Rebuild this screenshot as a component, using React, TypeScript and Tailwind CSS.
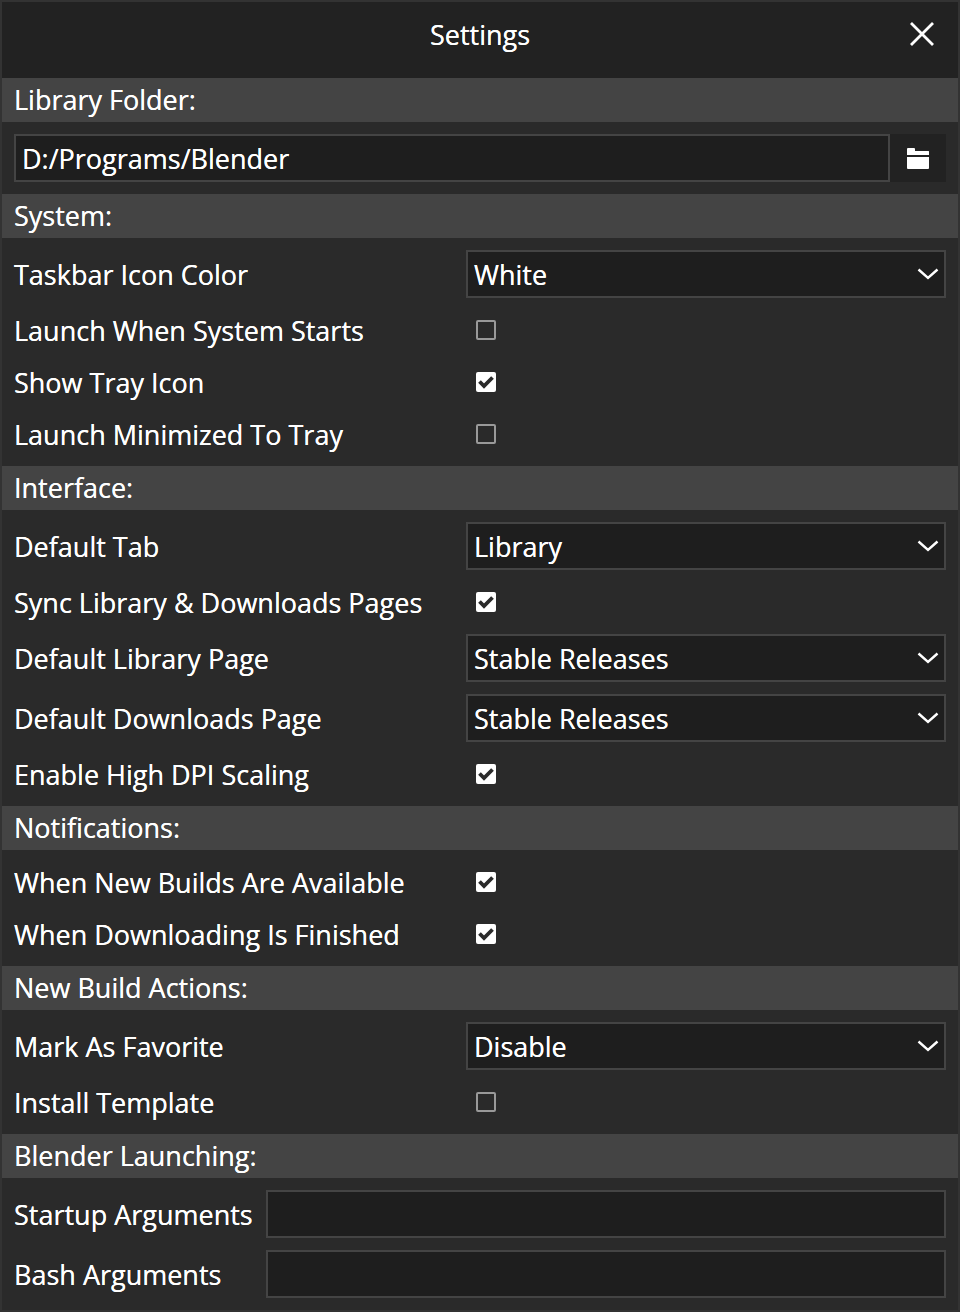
const Chevron = () => (
  <svg width="24" height="14" viewBox="0 0 24 14" className="shrink-0" fill="none">
    <path d="M2.5 2.5 L12 11 L21.5 2.5" stroke="#fff" strokeWidth="2.4" />
  </svg>
)

function Section({ title }: { title: string }) {
  return <div className="flex h-[44px] items-center bg-[#444444] px-3 pb-[2px] leading-none">{title}</div>
}

function Select({ value }: { value: string }) {
  return (
    <div className="flex h-[48px] w-[480px] items-center justify-between border-2 border-[#444444] bg-[#1e1e1e] pr-[4px] pl-[6px]">
      <span className="pt-[2px]">{value}</span>
      <Chevron />
    </div>
  )
}

function Checkbox({ checked }: { checked?: boolean }) {
  return (
    <div className="ml-[10px] flex h-[20px] w-[20px] items-center justify-center">
      {checked ? (
        <div className="flex h-[20px] w-[20px] items-center justify-center rounded-[2px] bg-white">
          <svg width="16" height="14" viewBox="0 0 16 14" fill="none">
            <path d="M1.5 6.5 L6 11 L14.5 2.5" stroke="#2a2a2a" strokeWidth="3.8" />
          </svg>
        </div>
      ) : (
        <div className="h-[20px] w-[20px] rounded-[2px] border-2 border-[#999999]" />
      )}
    </div>
  )
}

function SelectRow({ label, value }: { label: string; value: string }) {
  return (
    <div className="flex h-[60px] items-center px-3">
      <div className="w-[452px] shrink-0 pt-[2px]">{label}</div>
      <Select value={value} />
    </div>
  )
}

function CheckRow({ label, checked }: { label: string; checked?: boolean }) {
  return (
    <div className="flex h-[52px] items-center px-3">
      <div className="w-[452px] shrink-0 pt-[2px]">{label}</div>
      <Checkbox checked={checked} />
    </div>
  )
}

function ArgRow({ label }: { label: string }) {
  return (
    <div className="flex h-[60px] items-center px-3">
      <div className="w-[252px] shrink-0 pt-[2px]">{label}</div>
      <div className="h-[48px] flex-1 border-2 border-[#444444] bg-[#1e1e1e]" />
    </div>
  )
}

export default function App() {
  return (
    <div className="h-[1312px] w-[960px] border-2 border-[#333333] bg-[#2a2a2a] font-['Open_Sans',sans-serif] text-[27px] text-white [text-shadow:0_0_0.5px_#fff]">
      <div className="relative flex h-[76px] items-center justify-center bg-[#222222] pb-[10px]">
        <span>Settings</span>
        <svg width="24" height="24" viewBox="0 0 24 24" fill="none" className="absolute top-[20px] right-[24px]">
          <path d="M1 1 L23 23 M23 1 L1 23" stroke="#fff" strokeWidth="2.8" />
        </svg>
      </div>

      <Section title="Library Folder:" />
      <div className="flex h-[72px] items-center px-3">
        <div className="flex h-[48px] flex-1 items-center border-2 border-[#444444] bg-[#1e1e1e] pt-[2px] pl-[6px]">D:/Programs/Blender</div>
        <div className="flex h-[48px] w-[56px] items-center justify-center bg-[#222222]">
          <svg width="22" height="21" viewBox="0 0 22 21" fill="white">
            <path d="M0 1 a1 1 0 0 1 1-1 H7 a1 1 0 0 1 1 1 V3 H21.5 a.5 .5 0 0 1 .5 .5 V7 H0 Z" />
            <path d="M0 9 H22 V20 a1 1 0 0 1-1 1 H1 a1 1 0 0 1-1-1 Z" />
          </svg>
        </div>
      </div>

      <Section title="System:" />
      <div className="py-[6px]">
        <SelectRow label="Taskbar Icon Color" value="White" />
        <CheckRow label="Launch When System Starts" />
        <CheckRow label="Show Tray Icon" checked />
        <CheckRow label="Launch Minimized To Tray" />
      </div>

      <Section title="Interface:" />
      <div className="py-[6px]">
        <SelectRow label="Default Tab" value="Library" />
        <CheckRow label="Sync Library & Downloads Pages" checked />
        <SelectRow label="Default Library Page" value="Stable Releases" />
        <SelectRow label="Default Downloads Page" value="Stable Releases" />
        <CheckRow label="Enable High DPI Scaling" checked />
      </div>

      <Section title="Notifications:" />
      <div className="py-[6px]">
        <CheckRow label="When New Builds Are Available" checked />
        <CheckRow label="When Downloading Is Finished" checked />
      </div>

      <Section title="New Build Actions:" />
      <div className="py-[6px]">
        <SelectRow label="Mark As Favorite" value="Disable" />
        <CheckRow label="Install Template" />
      </div>

      <Section title="Blender Launching:" />
      <div className="py-[6px]">
        <ArgRow label="Startup Arguments" />
        <ArgRow label="Bash Arguments" />
      </div>
    </div>
  )
}
